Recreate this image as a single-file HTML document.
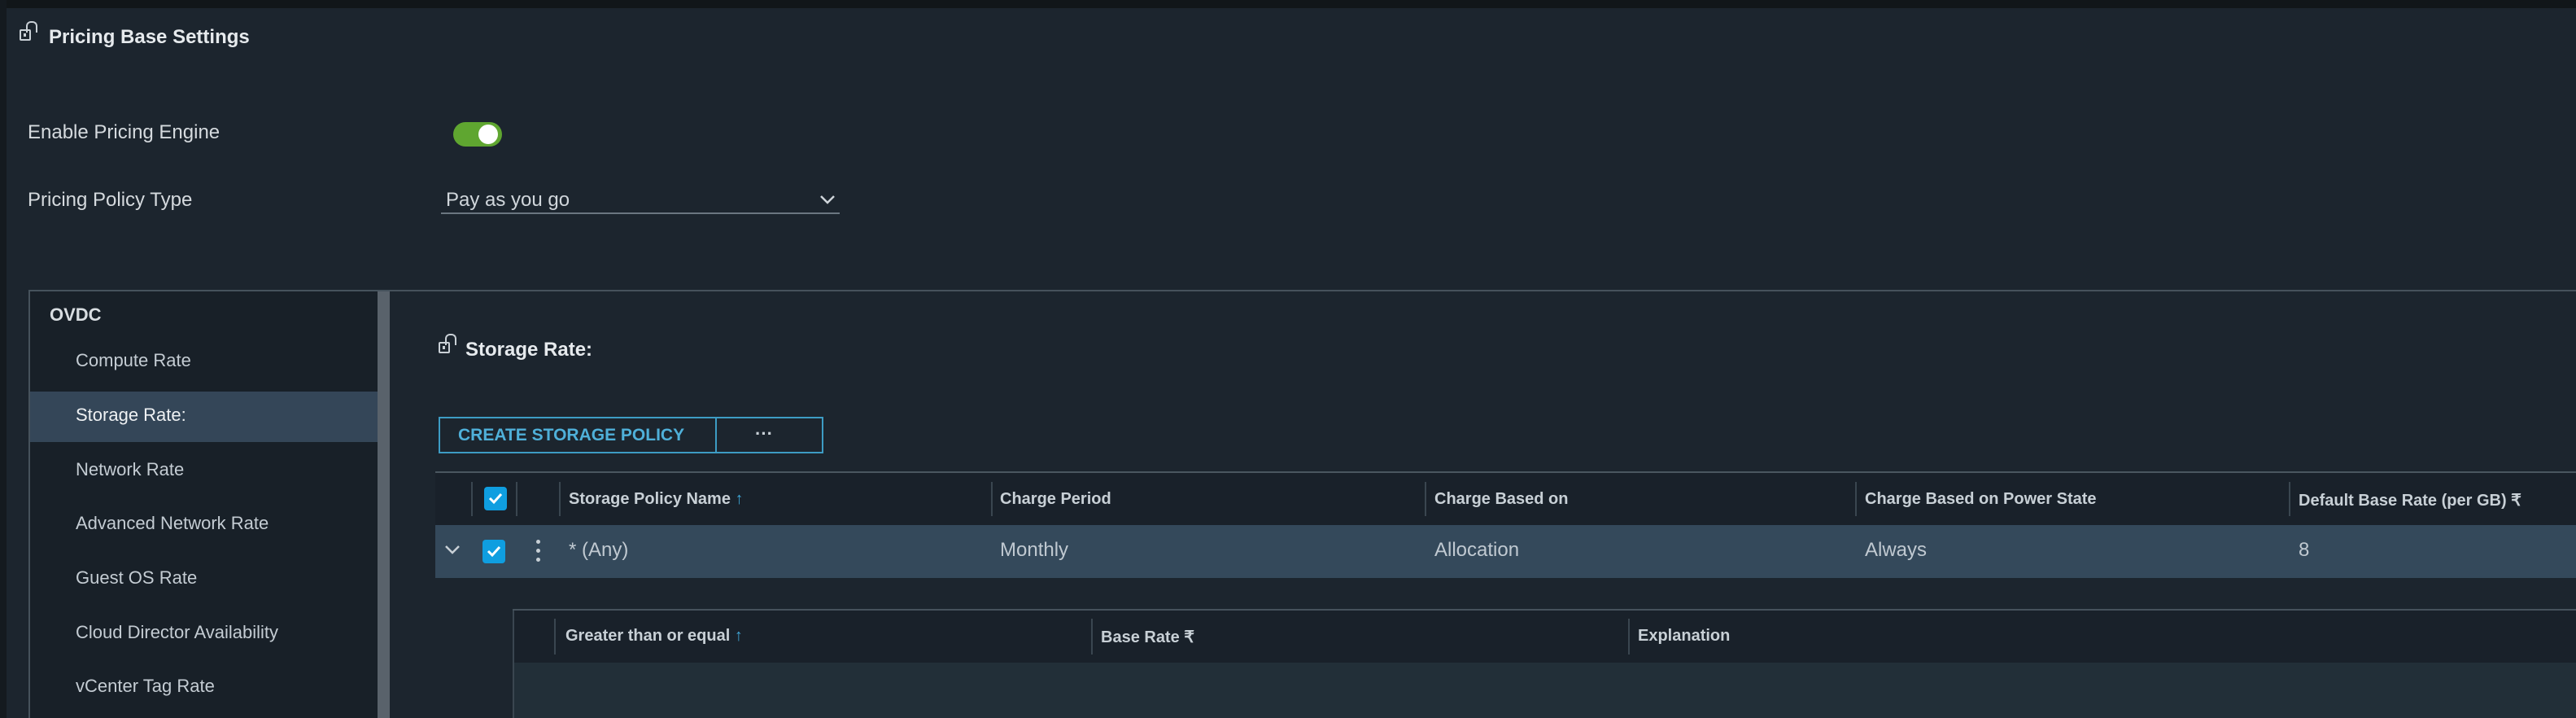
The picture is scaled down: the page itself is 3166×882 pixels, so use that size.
<!DOCTYPE html>
<html><head><meta charset="utf-8"><style>
*{margin:0;padding:0;box-sizing:border-box}
body{width:3166px;height:882px;overflow:hidden;background:#1c252e;font-family:"Liberation Sans",sans-serif;color:#d5dade;position:relative}
.a{position:absolute;white-space:nowrap}
.lock{position:absolute;width:14px;height:14px;border:2px solid #c9d0d6;border-radius:2px}
.lock:before{content:"";position:absolute;left:6px;top:-12px;width:10px;height:12px;border:2px solid #c9d0d6;border-bottom:none;border-radius:6px 6px 0 0}
.lock:after{content:"";position:absolute;left:3px;top:3px;width:3px;height:4px;background:#c9d0d6}
.nav{font-size:22px;color:#c4ccd3}
.th{font-size:20px;color:#c8d0d6;font-weight:bold}
.td{font-size:24px;color:#c0c9d1}
.sep{position:absolute;width:2px;background:#3a4650}
.cb{position:absolute;width:28px;height:29px;background:#0f9ee0;border-radius:4px}
.cb svg{position:absolute;left:5px;top:6px}
</style></head><body>
<div class="a" style="left:0;top:0;width:3166px;height:10px;background:#111619"></div>
<div class="a" style="left:0;top:0;width:8px;height:882px;background:#141a1f"></div>
<div class="lock" style="left:24px;top:36px"></div>
<div class="a" style="left:60px;top:32px;font-size:24px;font-weight:bold;color:#e6eaed">Pricing Base Settings</div>
<div class="a" style="left:34px;top:149px;font-size:24px">Enable Pricing Engine</div>
<div class="a" style="left:557px;top:150px;width:60px;height:30px;background:#5fa630;border-radius:15px"></div>
<div class="a" style="left:588px;top:153px;width:24px;height:24px;background:#fff;border-radius:50%"></div>
<div class="a" style="left:34px;top:232px;font-size:24px">Pricing Policy Type</div>
<div class="a" style="left:548px;top:232px;font-size:24px;color:#d0d6db">Pay as you go</div>
<svg class="a" style="left:1007px;top:238px" width="20" height="14"><path d="M2 3l8 8 8-8" stroke="#cfd5da" stroke-width="2.5" fill="none"/></svg>
<div class="a" style="left:542px;top:261px;width:490px;height:2px;background:#6b7680"></div>
<div class="a" style="left:35px;top:356px;width:3131px;height:2px;background:#46525c"></div>
<div class="a" style="left:35px;top:358px;width:2px;height:524px;background:#46525c"></div>
<div class="a" style="left:37px;top:358px;width:427px;height:524px;background:#182028"></div>
<div class="a" style="left:464px;top:358px;width:15px;height:524px;background:#59626b"></div>
<div class="a nav" style="left:61px;top:374px;font-weight:bold;color:#d8dde1">OVDC</div>
<div class="a" style="left:37px;top:481px;width:427px;height:62px;background:#344658"></div>
<div class="a nav" style="left:93px;top:430px">Compute Rate</div>
<div class="a nav" style="left:93px;top:497px;color:#eef1f3">Storage Rate:</div>
<div class="a nav" style="left:93px;top:564px">Network Rate</div>
<div class="a nav" style="left:93px;top:630px">Advanced Network Rate</div>
<div class="a nav" style="left:93px;top:697px">Guest OS Rate</div>
<div class="a nav" style="left:93px;top:764px">Cloud Director Availability</div>
<div class="a nav" style="left:93px;top:830px">vCenter Tag Rate</div>
<div class="lock" style="left:539px;top:420px"></div>
<div class="a" style="left:572px;top:416px;font-size:24px;font-weight:bold;color:#e6eaed">Storage Rate:</div>
<div class="a" style="left:539px;top:512px;width:473px;height:45px;border:2px solid #3d9cc4"></div>
<div class="a" style="left:879px;top:512px;width:2px;height:45px;background:#3d9cc4"></div>
<div class="a" style="left:563px;top:523px;font-size:21px;font-weight:bold;color:#4fb0d9">CREATE STORAGE POLICY</div>
<div class="a" style="left:928px;top:520px;font-size:22px;font-weight:bold;color:#c8d0d6">···</div>
<div class="a" style="left:535px;top:579px;width:2631px;height:2px;background:#4a565f"></div>
<div class="a" style="left:535px;top:581px;width:2631px;height:64px;background:#19212a"></div>
<div class="sep" style="left:579px;top:592px;height:42px"></div>
<div class="sep" style="left:634px;top:592px;height:42px"></div>
<div class="sep" style="left:687px;top:592px;height:42px"></div>
<div class="sep" style="left:1218px;top:592px;height:42px"></div>
<div class="sep" style="left:1751px;top:592px;height:42px"></div>
<div class="sep" style="left:2280px;top:592px;height:42px"></div>
<div class="sep" style="left:2813px;top:592px;height:42px"></div>
<div class="cb" style="left:595px;top:598px"><svg width="18" height="16"><path d="M2 8l5 5 9-10" stroke="#fff" stroke-width="3" fill="none"/></svg></div>
<div class="a th" style="left:699px;top:602px">Storage Policy Name <span style="color:#3fa6d6">↑</span></div>
<div class="a th" style="left:1229px;top:602px">Charge Period</div>
<div class="a th" style="left:1763px;top:602px">Charge Based on</div>
<div class="a th" style="left:2292px;top:602px">Charge Based on Power State</div>
<div class="a th" style="left:2825px;top:602px">Default Base Rate (per GB) ₹</div>
<div class="a" style="left:535px;top:645px;width:2631px;height:65px;background:#34495b"></div>
<svg class="a" style="left:546px;top:668px" width="20" height="14"><path d="M2 3l8 8 8-8" stroke="#c8d0d6" stroke-width="2.5" fill="none"/></svg>
<div class="cb" style="left:593px;top:663px"><svg width="18" height="16"><path d="M2 8l5 5 9-10" stroke="#fff" stroke-width="3" fill="none"/></svg></div>
<div class="a" style="left:659px;top:663px;width:5px;height:5px;background:#c8d0d6;border-radius:50%;box-shadow:0 11px 0 #c8d0d6,0 22px 0 #c8d0d6"></div>
<div class="a td" style="left:699px;top:662px">* (Any)</div>
<div class="a td" style="left:1229px;top:662px">Monthly</div>
<div class="a td" style="left:1763px;top:662px">Allocation</div>
<div class="a td" style="left:2292px;top:662px">Always</div>
<div class="a td" style="left:2825px;top:662px">8</div>
<div class="a" style="left:630px;top:748px;width:2536px;height:2px;background:#46525c"></div>
<div class="a" style="left:630px;top:750px;width:2px;height:132px;background:#3a4650"></div>
<div class="a" style="left:632px;top:750px;width:2534px;height:64px;background:#19212a"></div>
<div class="a" style="left:632px;top:814px;width:2534px;height:68px;background:#222f38"></div>
<div class="sep" style="left:681px;top:760px;height:44px"></div>
<div class="sep" style="left:1341px;top:760px;height:44px"></div>
<div class="sep" style="left:2001px;top:760px;height:44px"></div>
<div class="a th" style="left:695px;top:770px">Greater than or equal <span style="color:#3fa6d6">↑</span></div>
<div class="a th" style="left:1353px;top:770px">Base Rate ₹</div>
<div class="a th" style="left:2013px;top:770px">Explanation</div>
</body></html>
